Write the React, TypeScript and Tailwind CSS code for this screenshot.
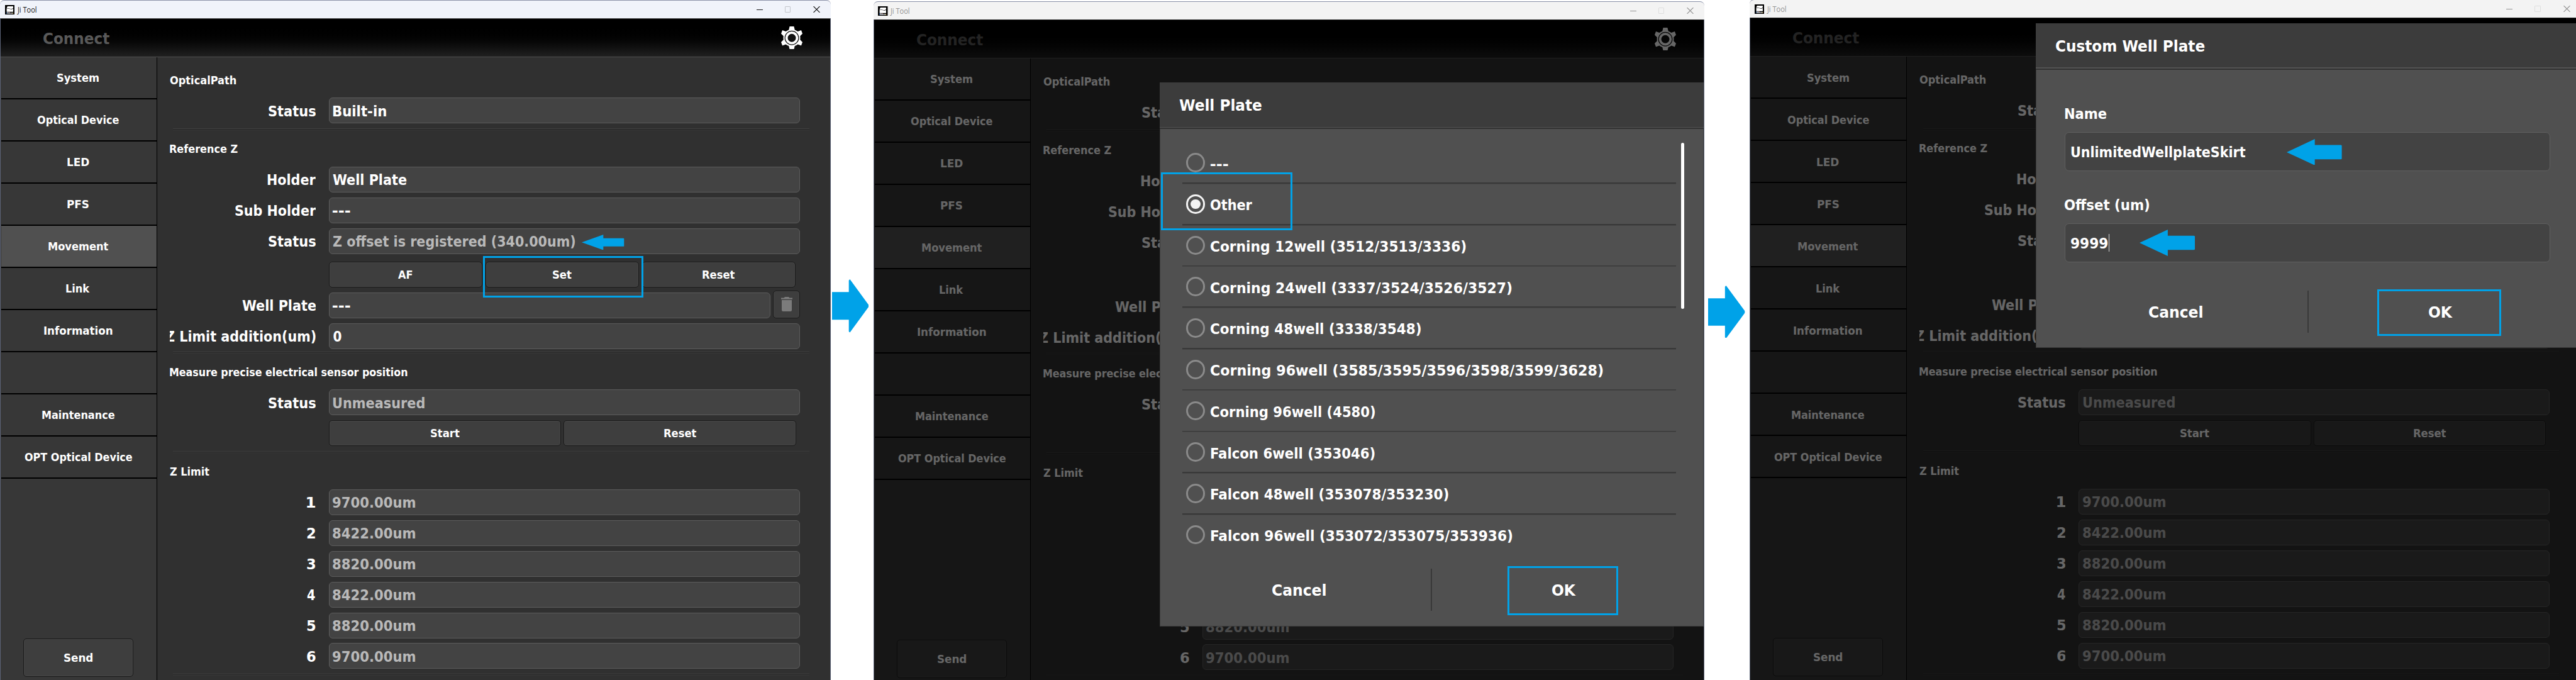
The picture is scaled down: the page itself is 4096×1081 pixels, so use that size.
import { useLayoutEffect, useRef } from "react";
import type { ReactNode } from "react";

const BLUE = "#00a2e8";

/* Single line of UI text, stretched horizontally so its ink fills exactly `w` pixels. */
function T({ children, w, className = "" }: { children: string; w: number; className?: string }) {
  const box = useRef<HTMLSpanElement>(null);
  const ink = useRef<HTMLSpanElement>(null);
  useLayoutEffect(() => {
    const el = ink.current;
    if (!el || !box.current) return;
    const cs = getComputedStyle(el);
    const ctx = document.createElement("canvas").getContext("2d");
    if (!ctx) return;
    ctx.font = `${cs.fontWeight} ${cs.fontSize} ${cs.fontFamily}`;
    const m = ctx.measureText(children);
    const k = w / (m.actualBoundingBoxLeft + m.actualBoundingBoxRight);
    box.current.style.width = `${w}px`;
    el.style.transform = `translateX(${m.actualBoundingBoxLeft * k}px) scaleX(${k})`;
  }, [children, w]);
  return (
    <span ref={box} className={"inline-block flex-none pt-[2px] leading-none whitespace-pre " + className}>
      <span ref={ink} className="inline-block origin-left">
        {children}
      </span>
    </span>
  );
}

const NAV: [string, number][] = [
  ["System", 66],
  ["Optical Device", 130],
  ["LED", 34.5],
  ["PFS", 33.7],
  ["Movement", 95],
  ["Link", 38],
  ["Information", 108.7],
  ["", 0],
  ["Maintenance", 115.2],
  ["OPT Optical Device", 171.3],
];

const LIMITS = ["9700.00um", "8422.00um", "8820.00um", "8422.00um", "8820.00um", "9700.00um"];

const PLATES: [string, number][] = [
  ["---", 28.5],
  ["Other", 66],
  ["Corning 12well (3512/3513/3336)", 406],
  ["Corning 24well (3337/3524/3526/3527)", 478.8],
  ["Corning 48well (3338/3548)", 334.3],
  ["Corning 96well (3585/3595/3596/3598/3599/3628)", 623.8],
  ["Corning 96well (4580)", 261.5],
  ["Falcon 6well (353046)", 261],
  ["Falcon 48well (353078/353230)", 378],
  ["Falcon 96well (353072/353075/353936)", 479.7],
];

function AppIcon() {
  return (
    <svg className="h-[15px] w-[15.5px] flex-none" viewBox="0 0 24 24" preserveAspectRatio="none">
      <rect width="24" height="24" fill="#000" />
      <path d="M6 3h14v4q-1 3-6 2.500L4 7.500Z" fill="#fff" />
      <path d="M4 8.500l10 2q4 .5 6-1.500v8H4Z" fill="#fff" />
      <text x="12" y="23" fontSize="6" fontWeight="700" textAnchor="middle" fill="#fff" fontFamily="Liberation Sans, sans-serif" fontStyle="italic">
        Nikon
      </text>
    </svg>
  );
}

function GearIcon() {
  return (
    <svg className="h-[36.500px] w-[34px]" viewBox="-50 -54 100 108" preserveAspectRatio="none">
      <path
        d="M-10-54H10L14-38Q22-35 28-30L44-36L50-20L39-9Q40 0 39 9L50 20L44 36L28 30Q22 35 14 38L10 54H-10L-14 38Q-22 35-28 30L-44 36L-50 20L-39 9Q-40 0-39-9L-50-20L-44-36L-28-30Q-22-35-14-38Z"
        fill="#fff"
      />
      <circle r="32" fill="none" stroke="#111" strokeWidth="3.500" />
      <circle r="19" fill="#111" />
    </svg>
  );
}

function TrashIcon() {
  return (
    <svg className="h-[23px] w-[18px]" viewBox="0 0 18 23" preserveAspectRatio="none">
      <path d="M0 1.500H4.500L6 0H12L13.500 1.500H18V3.700H0ZM1 5H17V21Q17 23 15 23H3Q1 23 1 21Z" fill="#7b7b7b" />
    </svg>
  );
}

function TitleBar({ active }: { active: boolean }) {
  return (
    <div
      className={
        "flex h-[29px] flex-none items-center rounded-t-[7px] border-t border-[#8b92a8] pr-[17px] pl-[7.500px] " +
        (active ? "bg-[#f0f3fa] text-[#1b1b1b]" : "bg-[#f3f3f3] text-[#949494]")
      }
    >
      <AppIcon />
      <T w={31.5} className="ml-[3.500px] font-['Open_Sans',sans-serif] text-[12.500px] font-normal">
        Ji Tool
      </T>
      <div className="ml-auto flex items-center">
        <div className="mr-[35px] h-px w-[10px] bg-current" />
        <div className={"mr-[36px] h-[10px] w-[9.500px] rounded-[1px] border " + (active ? "border-[#c3c5cb]" : "border-[#dedede]")} />
        <svg className="h-[10px] w-[11px]" viewBox="0 0 11 10">
          <path d="M.5 0L10.500 10M10.500 0L.5 10" stroke="currentColor" strokeWidth="1.100" />
        </svg>
      </div>
    </div>
  );
}

function Btn({ label, w, className }: { label: string; w: number; className: string }) {
  return (
    <div
      className={
        "flex flex-none items-center justify-center rounded-[5px] border border-[#1a1a1a] bg-[#3e3e3e] text-[17px] shadow-[inset_0_0_0_1px_#454545] " +
        className
      }
    >
      <T w={w}>{label}</T>
    </div>
  );
}

function Field({ text, w, muted, className = "w-[749.100px]" }: { text: string; w: number; muted?: boolean; className?: string }) {
  return (
    <div
      className={
        "flex h-[41px] flex-none items-center rounded-[6px] border border-[#5c5c5c] bg-[#434343] pl-[5.900px] text-[22.300px] " +
        (muted ? "text-[#b9b9b9] " : "text-white ") +
        className
      }
    >
      <T w={w}>{text}</T>
    </div>
  );
}

function Row({ label, lw = 0, className = "", children }: { label?: string; lw?: number; className?: string; children: ReactNode }) {
  return (
    <div className={"flex h-[41px] flex-none items-center " + className}>
      <div className="mr-[20.700px] flex h-full w-[231.800px] flex-none items-center justify-end overflow-hidden text-[22.300px]">
        {label && <T w={lw}>{label}</T>}
      </div>
      {children}
    </div>
  );
}

function Section({ children, w, className }: { children: string; w: number; className: string }) {
  return (
    <div className={"flex h-[30px] flex-none items-center pb-[2px] text-[17px] " + className}>
      <T w={w}>{children}</T>
    </div>
  );
}

function Rule({ className }: { className: string }) {
  return (
    <div className={"ml-[5.200px] flex h-[3.400px] w-[1011.700px] flex-none flex-col " + className}>
      <div className="h-px bg-[#424242]" />
      <div className="h-px bg-[#222222]" />
      <div className="h-px bg-[#383838]" />
    </div>
  );
}

function ToolWindow({ active = false, className, children }: { active?: boolean; className: string; children?: ReactNode }) {
  return (
    <div className={"relative flex h-[1084px] w-[1321.400px] flex-none flex-col " + className}>
      <TitleBar active={active} />
      <div className="relative flex flex-1 flex-col overflow-hidden border-x border-[#5c6377]">
        <div className="flex h-[61.800px] flex-none items-center justify-between border-t border-b border-[#4f4f4f] bg-linear-to-b from-black from-15% to-[#202020] pr-[44.500px] pl-[68px]">
          <T w={105.7} className="pt-[4px] text-[24.700px] text-[#595959]">
            Connect
          </T>
          <GearIcon />
        </div>
        <div className="flex flex-1 overflow-hidden bg-[#303030]">
          <div className="flex w-[248.600px] flex-none flex-col border-r border-black bg-[#373737] pl-px">
            {NAV.map(([name, w]) => (
              <div
                key={name}
                className={
                  "flex h-[67.030px] flex-none items-center justify-center border-b-[2.400px] border-black pt-px pr-[2px] text-[17px] " +
                  (name === "Movement" ? "bg-[#505050]" : "")
                }
              >
                {name && <T w={w}>{name}</T>}
              </div>
            ))}
            <Btn label="Send" w={45.3} className="mt-[254px] ml-[35px] h-[61px] w-[175px]" />
          </div>
          <div className="flex flex-1 flex-col pl-[20.500px]">
            <Section w={105.3} className="mt-[22.300px]">OpticalPath</Section>
            <Row label="Status" lw={74.7} className="mt-[12.300px]">
              <Field text="Built-in" w={85} />
            </Row>
            <Rule className="mt-[8px]" />
            <Section w={108} className="mt-[14.700px]">Reference Z</Section>
            <Row label="Holder" lw={76.8} className="mt-[12.300px]">
              <Field text="Well Plate" w={117.4} />
            </Row>
            <Row label="Sub Holder" lw={128.2} className="mt-[8px]">
              <Field text="---" w={28.5} />
            </Row>
            <Row label="Status" lw={74.7} className="mt-[8px]">
              <Field text="Z offset is registered (340.00um)" w={385.5} muted />
            </Row>
            <Row className="mt-[11.900px]">
              <div className="flex gap-[4.700px]">
                <Btn label="AF" w={23} className="h-[41px] w-[244.400px]" />
                <Btn label="Set" w={29.7} className="h-[41px] w-[244.400px]" />
                <Btn label="Reset" w={51} className="h-[41px] w-[244.400px]" />
              </div>
            </Row>
            <Row label="Well Plate" lw={117.4} className="mt-[8px]">
              <Field text="---" w={28.5} className="w-[702.200px]" />
              <div className="-mt-[3px] ml-[4.700px] flex h-[44px] w-[42.700px] flex-none items-center justify-center rounded-[5px] border border-[#1a1a1a] bg-[#3e3e3e] shadow-[inset_0_0_0_1px_#454545]">
                <TrashIcon />
              </div>
            </Row>
            <Row label="Z Limit addition(um)" lw={239} className="mt-[8px]">
              <Field text="0" w={13} />
            </Row>
            <Rule className="mt-[3.900px]" />
            <Section w={377.6} className="mt-[15.100px]">Measure precise electrical sensor position</Section>
            <Row label="Status" lw={74.7} className="mt-[12.300px]">
              <Field text="Unmeasured" w={146} muted />
            </Row>
            <Row className="mt-[8px]">
              <div className="flex gap-[4.200px]">
                <Btn label="Start" w={45.5} className="h-[41px] w-[369.700px]" />
                <Btn label="Reset" w={51} className="h-[41px] w-[369.700px]" />
              </div>
            </Row>
            <Rule className="mt-[7.700px]" />
            <Section w={62.6} className="mt-[14.700px]">Z Limit</Section>
            <div className="mt-[12.700px] flex flex-col gap-[7.950px]">
              {LIMITS.map((v, i) => (
                <Row key={i} label={String(i + 1)} lw={13.5}>
                  <Field text={v} w={131.6} muted />
                </Row>
              ))}
            </div>
            <Rule className="mt-[8px]" />
          </div>
        </div>
        {!active && <div className="absolute inset-0 bg-black/60" />}
      </div>
      {children}
    </div>
  );
}

function Arrow({ left = false, className }: { left?: boolean; className: string }) {
  return (
    <svg className={"absolute " + className} viewBox="0 0 100 100" preserveAspectRatio="none">
      <path
        d={left ? "M0 50L51 0V23H98Q100 23 100 26V74Q100 77 98 77H51V100Z" : "M0 24H46V2L49 0L100 48V52L49 100L46 98V76H0Z"}
        fill={BLUE}
      />
    </svg>
  );
}

function Mark({ className }: { className: string }) {
  return <div className={"absolute border-[3px] border-[#00a2e8] " + className} />;
}

function Dialog({ title, w, className, children }: { title: string; w: number; className: string; children: ReactNode }) {
  return (
    <div className={"absolute left-[454.900px] flex w-[865px] flex-col bg-[#505050] " + className}>
      <div className="flex h-[70.800px] flex-none items-center bg-[#3c3c3c] pt-[3px] pl-[31.500px] text-[24.700px]">
        <T w={w}>{title}</T>
      </div>
      <div className="h-[1.400px] flex-none bg-[#535353]" />
      <div className="h-[2.400px] flex-none bg-[#323232]" />
      <div className="flex flex-1 flex-col border-x border-b border-[#3a3a3a]">{children}</div>
    </div>
  );
}

function Footer({ className }: { className: string }) {
  return (
    <div className={"mx-auto flex h-[67.200px] w-[841px] flex-none items-center text-[24.700px] " + className}>
      <div className="flex flex-1 justify-center pt-[2px]">
        <T w={84.8}>Cancel</T>
      </div>
      <div className="h-full w-[2px] bg-[#393939]" />
      <div className="flex flex-1 justify-center pt-[2px]">
        <T w={37.8}>OK</T>
      </div>
    </div>
  );
}

function Radio({ on }: { on: boolean }) {
  return (
    <div
      className={
        "flex h-[30.700px] w-[30.700px] flex-none items-center justify-center rounded-full border-[3px] " +
        (on ? "border-[#f4f4f4]" : "border-[#8a8a8a]")
      }
    >
      {on && <div className="h-[15.500px] w-[15.500px] rounded-full bg-[#f4f4f4]" />}
    </div>
  );
}

function PlateDialog() {
  return (
    <Dialog title="Well Plate" w={130.7} className="top-[128.800px] h-[865px]">
      <div className="mt-[21.700px] ml-[34.800px] flex w-[785px] flex-col">
        {PLATES.map(([name, w], i) => (
          <div key={name + i} className="flex h-[65.730px] flex-none flex-col">
            <div className="flex flex-1 items-center pl-[6px] text-[22.300px]">
              <Radio on={name === "Other"} />
              <div className="ml-[9px] flex pt-[2px]">
                <T w={w}>{name}</T>
              </div>
            </div>
            <div className={"h-[2.500px] flex-none border-b border-t " + (i < 9 ? "border-t-[#393939] border-b-[#454545] bg-[#393939]" : "border-transparent")} />
          </div>
        ))}
      </div>
      <Footer className="mt-[19.800px]" />
      <div className="absolute top-[96.700px] left-[828.700px] h-[264px] w-[5px] rounded-full bg-white" />
      <Mark className="top-[143.700px] left-[2.600px] h-[91.400px] w-[208.800px]" />
      <Mark className="top-[769.300px] left-[553.400px] h-[78px] w-[175.400px]" />
    </Dialog>
  );
}

function Entry({ label, lw, text, tw, className, caret }: { label: string; lw: number; text: string; tw: number; className: string; caret?: boolean }) {
  return (
    <div className={"flex flex-none flex-col text-[22.300px] " + className}>
      <div className="flex h-[30px] items-center">
        <T w={lw}>{label}</T>
      </div>
      <div className="mt-[14.800px] flex h-[61.700px] w-[772px] items-center rounded-[7px] border border-[#5f5f5f] bg-[#434343] pl-[9px]">
        <T w={tw}>{text}</T>
        {caret && <div className="ml-px h-[28px] w-px bg-[#d8d8d8]" />}
      </div>
    </div>
  );
}

function CustomPlateDialog() {
  return (
    <Dialog title="Custom Well Plate" w={236} className="top-[37.300px] h-[516.600px]">
      <Entry label="Name" lw={66.5} text="UnlimitedWellplateSkirt" tw={278} className="mt-[54.400px] ml-[45.300px]" />
      <Entry label="Offset (um)" lw={134.6} text="9999" tw={58.3} caret className="mt-[38px] ml-[45.300px]" />
      <Footer className="mt-[45.100px]" />
      <Arrow left className="top-[184px] left-[399.200px] h-[41.800px] w-[87.600px]" />
      <Arrow left className="top-[328.300px] left-[164.800px] h-[42px] w-[88px]" />
      <Mark className="top-[423.600px] left-[542.400px] h-[73.900px] w-[197.700px]" />
    </Dialog>
  );
}

export default function App() {
  return (
    <div className="relative flex h-[1081px] w-[4096px] overflow-hidden bg-white font-['DejaVu_Sans_Condensed','DejaVu_Sans',sans-serif] font-bold text-white">
      <ToolWindow active className="">
        <Arrow left className="top-[372.500px] left-[925.300px] h-[24.500px] w-[67.300px]" />
        <Mark className="top-[406.700px] left-[768.300px] h-[66.600px] w-[254.500px]" />
      </ToolWindow>
      <ToolWindow className="mt-[2px] ml-[67.600px]">
        <PlateDialog />
      </ToolWindow>
      <ToolWindow className="-mt-[0.700px] ml-[71.900px]">
        <CustomPlateDialog />
      </ToolWindow>
      <Arrow className="top-[444.300px] left-[1323.300px] h-[84.600px] w-[58px]" />
      <Arrow className="top-[453.600px] left-[2716.300px] h-[83.900px] w-[58.300px]" />
    </div>
  );
}
